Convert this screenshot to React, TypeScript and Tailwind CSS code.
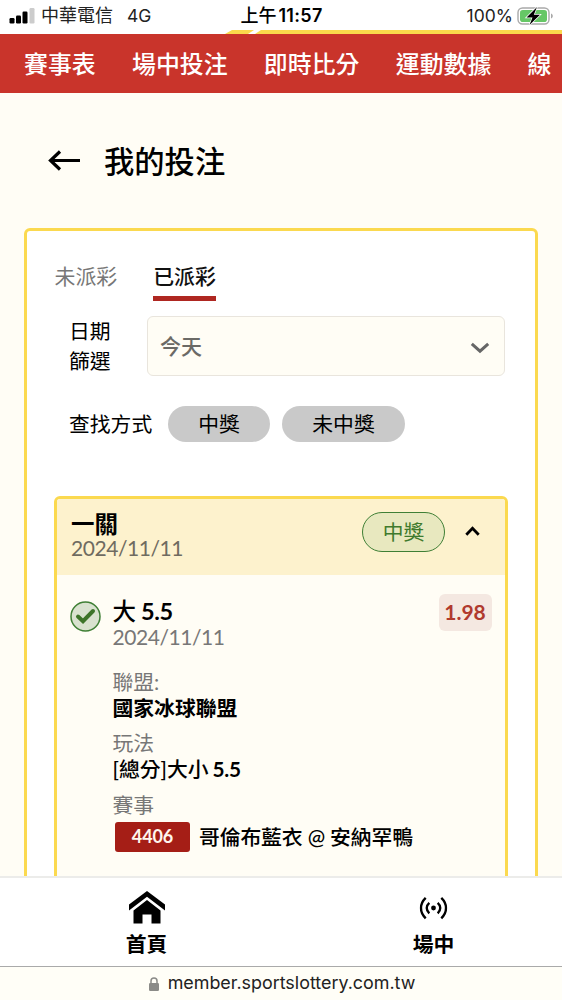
import React, { FC, ReactNode } from "react";

interface BetDetail {
  label: string;
  value: ReactNode;
}

interface PillProps {
  label: string;
  className: string;
}

const navItems = ["賽事表", "場中投注", "即時比分", "運動數據", "線"];

const details: BetDetail[] = [
  { label: "聯盟:", value: "國家冰球聯盟" },
  {
    label: "玩法",
    value: (
      <span className="font-medium">
        [總分]大小<span className="ml-[4px] font-bold tracking-[-0.3px]">5.5</span>
      </span>
    ),
  },
];

const StatusBar: FC = () => (
  <div className="relative flex h-[34px] shrink-0 items-center bg-white font-['Inter','Noto_Sans_CJK_TC',sans-serif] text-[17.5px] leading-[30px] text-[#222]">
    <svg className="absolute bottom-0 right-0" width="337" height="4" viewBox="0 0 337 4">
      <path d="M0 4 7 0H29L23 4Z M30 4 36 0H337V4Z" fill="#fbd94c" />
    </svg>
    <div className="relative -mt-[3px] flex h-[30px] flex-1 items-center pl-[9px]">
      <svg width="26" height="16" viewBox="0 0 26 16">
        <rect x="0.5" y="10" width="5" height="5.5" rx="1.2" fill="#000" />
        <rect x="7" y="7.5" width="5" height="8" rx="1.2" fill="#000" />
        <rect x="13.5" y="3.5" width="5" height="12" rx="1.2" fill="#000" />
        <rect x="20.5" y="0" width="5" height="15.5" rx="1.2" fill="#ccc" />
      </svg>
      <span className="ml-[6px] text-[18px]">中華電信</span>
      <span className="ml-[14px]">4G</span>
    </div>
    <span className="relative -mt-[3px] h-[30px] whitespace-nowrap font-semibold text-black">
      <span className="text-[18px] font-medium">上午</span>
      <span className="ml-[2px] text-[18px] tracking-[0.3px]">11:57</span>
    </span>
    <div className="relative -mt-[3px] flex h-[30px] flex-1 items-center justify-end pr-[8px]">
      <span>100%</span>
      <svg className="ml-[4px]" width="37" height="20" viewBox="0 0 37 20">
        <rect x="1" y="2" width="31" height="16" rx="4.5" fill="#fff" stroke="#a9a9a9" strokeWidth="1.4" />
        <rect x="3" y="4" width="27" height="12" rx="2.8" fill="#66c766" />
        <path d="M34 7.5c2.4.8 2.4 4.200 0 5Z" fill="#a9a9a9" />
        <path d="M20 1 9.500 11.500h6L12.500 19 23 8.700h-6.200Z" fill="#000" stroke="#fff" strokeWidth="1.500" paintOrder="stroke" />
      </svg>
    </div>
  </div>
);

const Pill: FC<PillProps> = ({ label, className }) => (
  <button className={`flex items-center justify-center rounded-full text-[20.8px] ${className}`}>{label}</button>
);

const FilterPanel: FC = () => (
  <>
    <div className="flex gap-[36px] pl-[27.5px] pt-[30px] text-[20.9px] leading-[29px]">
      <button className="h-[40px] pb-[11px] text-[#777]">未派彩</button>
      <button className="h-[40px] border-b-[5px] border-[#af2721] pb-[6px] font-medium text-[#111]">已派彩</button>
    </div>

    <div className="mt-[15px] flex items-center pl-[42px]">
      <div className="w-[78px] text-[20.8px] leading-[30px]">
        日期
        <br />
        篩選
      </div>
      <button className="flex h-[60px] w-[358px] items-center justify-between rounded-[6px] border-[1.5px] border-[#e9e5dd] bg-[#fffdf5] pl-[12px] pr-[14px] text-[21px] font-medium text-[#6b6a66]">
        今天
        <svg className="mt-[3px]" width="20" height="12" viewBox="0 0 20 12" fill="none" stroke="#666" strokeWidth="3">
          <path d="m1.800 1.800 8.200 7.400 8.200-7.400" />
        </svg>
      </button>
    </div>

    <div className="mt-[30px] flex h-[36px] items-center pl-[42px]">
      <span className="w-[99px] text-[20.8px]">查找方式</span>
      <Pill label="中獎" className="h-[36px] w-[102px] bg-[#c9c9c9]" />
      <Pill label="未中獎" className="ml-[12px] h-[36px] w-[123px] bg-[#c9c9c9]" />
    </div>
  </>
);

const BetCard: FC = () => (
  <div className="ml-[27px] mt-[54px] h-[500px] w-[454px] overflow-hidden rounded-[6px] border-[3px] border-[#fbd94f] bg-[#fffdf5]">
    <div className="flex h-[76px] items-start bg-[#fdf2cd] pl-[14px]">
      <div className="flex-1 pt-[12px]">
        <div className="h-[26px] text-[23.5px] font-bold leading-[26px]">一關</div>
        <div className="text-[21px] leading-[22px] tracking-[-0.45px] text-[#6f6b60]">2024/11/11</div>
      </div>
      <Pill label="中獎" className="mt-[13px] h-[40px] w-[83px] border-[1.5px] border-[#3f7f35] bg-[#e8e8bf] text-[#3f7a2d]" />
      <svg className="ml-[20px] mr-[25px] mt-[27px]" width="15" height="10" viewBox="0 0 15 10" fill="none" stroke="#000" strokeWidth="2.800">
        <path d="M1.300 8.700 7.500 2.200l6.200 6.500" />
      </svg>
    </div>

    <div className="flex items-start pl-[13px] pt-[18px]">
      <svg className="mt-[7.500px]" width="31" height="31" viewBox="0 0 31 31" fill="none">
        <circle cx="15.500" cy="15.500" r="14.500" fill="#d9e2cf" stroke="#3f7f35" strokeWidth="1.500" />
        <path d="m8 15.500 5 4.600 10-10.100" stroke="#3d7429" strokeWidth="4" strokeLinecap="round" />
      </svg>
      <div className="ml-[11.500px] flex-1">
        <div className="h-[31px] pt-[4px] text-[23.5px] font-medium leading-[29px]">
          大<span className="ml-[5px] font-bold tracking-[-0.3px]">5.5</span>
        </div>
        <div className="h-[35px] pt-[2px] text-[21px] leading-[22px] tracking-[-0.45px] text-[#777]">2024/11/11</div>

        <dl className="mt-[9px]">
          {details.map((detail) => (
            <div key={detail.label} className="h-[61px] text-[20.8px]">
              <dt className="h-[27px] leading-[28px] text-[#777]">{detail.label}</dt>
              <dd className="font-bold leading-[26px]">{detail.value}</dd>
            </div>
          ))}
          <div className="text-[20.8px]">
            <dt className="h-[31px] leading-[29px] text-[#777]">賽事</dt>
            <dd className="flex items-center whitespace-nowrap font-medium tracking-[-0.1px]">
              <span className="ml-[2.500px] mr-[9px] flex h-[30px] w-[75px] items-center justify-center rounded-[3px] bg-[#a51e16] text-[18px] font-bold text-[#fff6ee]">
                4406
              </span>
              哥倫布藍衣 @ 安納罕鴨
            </dd>
          </div>
        </dl>
      </div>
      <div className="-ml-[80px] mr-[13.5px] mt-[0.5px] flex h-[37px] w-[53px] items-center justify-center rounded-[6px] bg-[#f4e8e1] text-[21px] font-bold text-[#b03a2e]">
        1.98
      </div>
    </div>
  </div>
);

const BottomNav: FC = () => (
  <nav className="flex h-[90px] shrink-0 border-t-2 border-[#ececea] bg-white text-[20.8px] font-bold leading-[30px]">
    <a className="flex w-[293px] shrink-0 flex-col items-center pt-[13px]">
      <svg width="36" height="34" viewBox="0 0 36 34" fill="#000">
        <path d="M18 0 36 13.500V19.500L18 5.800 0 19.500V13.500Z" />
        <path d="M18 9 31.500 19.500V32.500H22.500V23.500H13.500V32.500H4.500V19.500Z" />
      </svg>
      <span className="mt-[4px]">首頁</span>
    </a>
    <a className="flex w-[281px] shrink-0 flex-col items-center pt-[18px]">
      <svg className="-translate-x-[0.5px]" width="28" height="24" viewBox="0 0 28 24" fill="none" stroke="#000" strokeWidth="2.400">
        <circle cx="14" cy="12" r="2.400" fill="#000" stroke="none" />
        <path d="M9.800 6.800c-3.400 3-3.400 7.500 0 10.500M18.200 6.800c3.400 3 3.400 7.500 0 10.500M6.200 1.800c-6.300 6-6.300 14.500 0 20.500M21.800 1.800c6.300 6 6.300 14.500 0 20.500" />
      </svg>
      <span className="mt-[9px]">場中</span>
    </a>
  </nav>
);

const AddressBar: FC = () => (
  <div className="flex h-[34px] shrink-0 items-center justify-center border-t border-[#aaa] bg-[#fffef7] font-['Inter',sans-serif] text-[17.9px] text-[#222]">
    <svg className="ml-[2px] mr-[9px]" width="10" height="14" viewBox="0 0 10 14">
      <path d="M2 7V4a3 3 0 0 1 6 0v3" fill="none" stroke="#8b8b88" strokeWidth="1.500" />
      <rect y="6" width="10" height="8" rx="1.300" fill="#8b8b88" />
    </svg>
    member.sportslottery.com.tw
  </div>
);

const App: FC = () => {
  return (
    <div className="flex h-[1000px] w-[562px] flex-col overflow-hidden bg-[#fffdf5] font-['Lato','Noto_Sans_CJK_TC',sans-serif] text-black">
      <StatusBar />
      <header className="flex h-[59px] shrink-0 items-center gap-[36.3px] bg-[#c9342b] pl-[24px] text-[23.9px] font-medium text-white">
        {navItems.map((item) => (
          <span key={item} className="shrink-0 leading-[59px]">
            {item}
          </span>
        ))}
      </header>

      <main className="min-h-0 flex-1 overflow-hidden">
        <div className="flex h-[135px] items-center pl-[48px]">
          <svg width="32" height="22" viewBox="0 0 32 22" fill="none" stroke="#000" strokeWidth="3.200">
            <path d="M2.500 10.500H32M12 1.500 2.500 10.500l9.500 9" />
          </svg>
          <h1 className="ml-[24px] text-[30.3px] font-medium leading-[40px]">我的投注</h1>
        </div>
        <section className="ml-[24px] h-[800px] w-[514px] rounded-[6px] border-[3px] border-[#fbd94f] bg-white">
          <FilterPanel />
          <BetCard />
        </section>
      </main>

      <BottomNav />
      <AddressBar />
    </div>
  );
};

export default App;
